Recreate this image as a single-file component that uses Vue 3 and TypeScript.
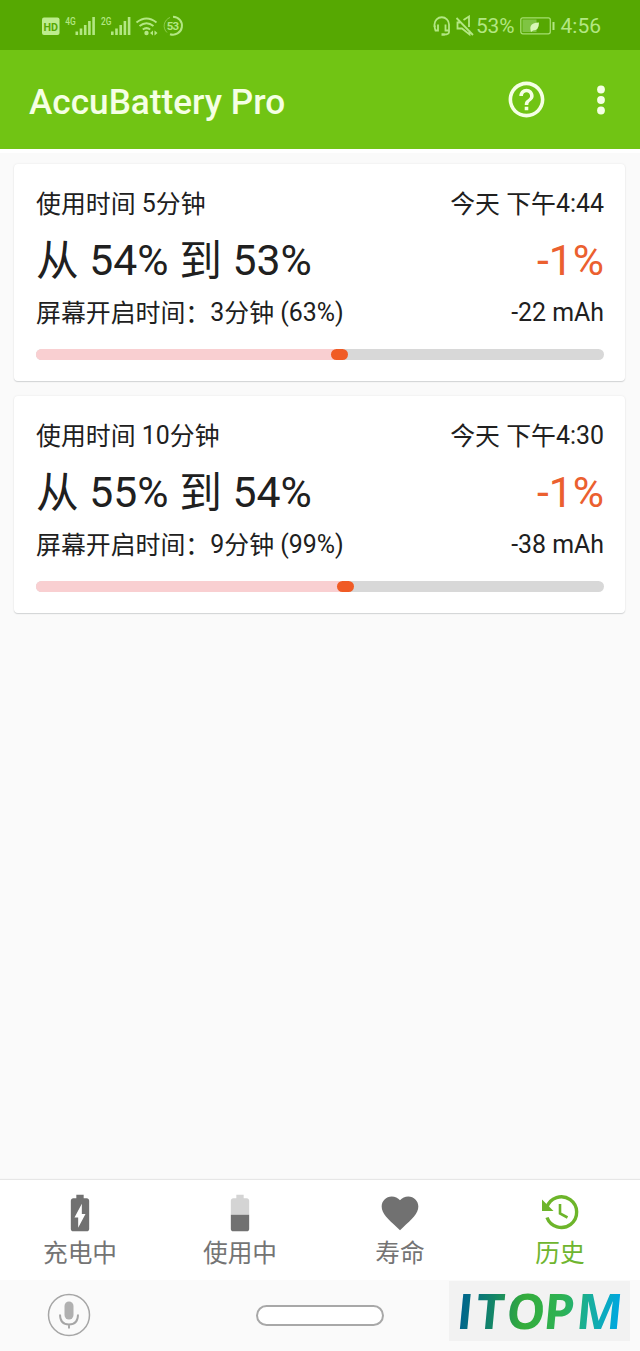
<script setup lang="ts">
interface Session {
  duration: string
  when: string
  range: string
  change: string
  screenOn: string
  charge: string
  from: number
  thumb: number
}

const sessions: Session[] = [
  { duration: '使用时间 5分钟', when: '今天 下午4:44', range: '从 54% 到 53%', change: '-1%', screenOn: '屏幕开启时间：3分钟 (63%)', charge: '-22 mAh', from: 52, thumb: 3 },
  { duration: '使用时间 10分钟', when: '今天 下午4:30', range: '从 55% 到 54%', change: '-1%', screenOn: '屏幕开启时间：9分钟 (99%)', charge: '-38 mAh', from: 53, thumb: 3 },
]

const tabs = [
  { id: 'charging', label: '充电中' },
  { id: 'using', label: '使用中' },
  { id: 'health', label: '寿命' },
  { id: 'history', label: '历史' },
]

// Splits a label into Han and Latin runs so that each gets its own baseline.
function runs(text: string): { text: string; han: boolean }[] {
  return text
    .split(/([\u4e00-\u9fff：]+)/)
    .filter((part) => part !== '')
    .map((part) => ({ text: part, han: /[\u4e00-\u9fff]/.test(part) }))
}
</script>

<template>
  <div class="screen">
    <div class="status">
      <svg class="status-left" width="144" height="24" viewBox="0 0 144 24">
        <rect x="0" y="4.500" width="17.500" height="17.500" rx="2" fill="#bdec8d" />
        <text x="1.500" y="17.600" class="hd" textLength="14.500" lengthAdjust="spacingAndGlyphs">HD</text>
        <text x="23.300" y="11.700" class="gen" textLength="10.500" lengthAdjust="spacingAndGlyphs">4G</text>
        <text x="59" y="11.700" class="gen" textLength="10.500" lengthAdjust="spacingAndGlyphs">2G</text>
        <g fill="#b3e783">
          <path d="M33.500 18.500h2.600v3.500h-2.600zM37.700 15.500h2.600v6.500h-2.600zM41.900 12h2.600v10h-2.600zM46.100 8h2.600v14h-2.600zM50.300 4h2.600v18h-2.600z" />
          <path d="M69 18.500h2.600v3.500h-2.600zM73.200 15.500h2.600v6.500h-2.600zM77.400 12h2.600v10h-2.600zM81.600 8h2.600v14h-2.600zM85.800 4h2.600v18h-2.600z" />
          <circle cx="104.500" cy="20" r="2.200" />
          <path d="M111 17.500l-3 2.500 3 2.500zM112.500 17.500l3 2.500-3 2.500z" />
        </g>
        <g fill="none" stroke="#b3e783" stroke-width="2">
          <path d="M94.500 9.500q10-8 20 0M97.500 13q7-5.500 14 0M100.800 16.500q3.700-2.800 7.400 0" />
          <path d="M131 3.700a9 9 0 1 1-3 17.500" />
          <path d="M125 19.500a9 9 0 0 1 3-15" stroke-width=".8" opacity=".7" />
        </g>
        <text x="124.700" y="17" class="speed" textLength="12.500">53</text>
      </svg>
      <div class="status-right">
        <svg width="42" height="22" viewBox="0 0 42 22" fill="none" stroke="#b3e783" stroke-width="1.800">
          <path d="M2.500 12V9.500A7.200 7.200 0 0 1 17 9.500V17q0 2.500-5 2.500" />
          <path d="M6 9.500v6H3.500q-1-2-.8-5M13.500 9.500v6H17" />
          <path d="M9.500 19.500h3" stroke-width="2.500" />
          <path d="M24.500 3L41 20M28 7.500h-2.500v6h4.500l7.500 6v-4M31.500 5l5.500-3.500v10.500" />
        </svg>
        <span class="pct">53%</span>
        <svg class="cell" width="36" height="20" viewBox="0 0 36 20">
          <rect x=".8" y="1.800" width="29.500" height="16" rx="2" fill="none" stroke="#a5de70" stroke-width="1.300" />
          <rect x="2.500" y="3.500" width="14" height="12.500" fill="#7fc443" />
          <path d="M10.500 14q-1-5 3-6.500 2-1 5.500-1 0 8-6 8l-2 1.500z" fill="#d9f8b8" />
          <path d="M33.500 6v8" stroke="#b3e783" stroke-width="2" />
        </svg>
        <span class="clock">4:56</span>
      </div>
    </div>

    <header class="appbar">
      <h1>AccuBattery Pro</h1>
      <svg class="help" width="43" height="43" viewBox="0 0 24 24" fill="#f5ffe4">
        <path d="M11 18h2v-2h-2v2zm1-16C6.480 2 2 6.480 2 12s4.480 10 10 10 10-4.480 10-10S17.520 2 12 2zm0 18c-4.410 0-8-3.590-8-8s3.590-8 8-8 8 3.590 8 8-3.590 8-8 8zm0-14c-2.210 0-4 1.790-4 4h2c0-1.100.9-2 2-2s2 .9 2 2c0 2-3 1.750-3 5h2c0-2.250 3-2.500 3-5 0-2.210-1.790-4-4-4z" />
      </svg>
      <svg class="more" width="10" height="32" viewBox="0 0 10 32" fill="#f5ffe4">
        <circle cx="5" cy="5.500" r="3.900" /><circle cx="5" cy="16" r="3.900" /><circle cx="5" cy="26.500" r="3.900" />
      </svg>
    </header>

    <main class="list">
      <section v-for="s in sessions" :key="s.when" class="card">
        <div class="row top">
          <div><span v-for="(r, i) in runs(s.duration)" :key="i" :class="{ han: r.han }">{{ r.text }}</span></div>
          <div><span v-for="(r, i) in runs(s.when)" :key="i" :class="{ han: r.han }">{{ r.text }}</span></div>
        </div>
        <div class="row big">
          <div><span v-for="(r, i) in runs(s.range)" :key="i" :class="{ han: r.han }">{{ r.text }}</span></div>
          <div class="change">{{ s.change }}</div>
        </div>
        <div class="row sub">
          <div><span v-for="(r, i) in runs(s.screenOn)" :key="i" :class="{ han: r.han }">{{ r.text }}</span></div>
          <div>{{ s.charge }}</div>
        </div>
        <div class="track">
          <div class="rest" :style="{ width: s.from + 1.5 + '%' }"></div>
          <div class="thumb" :style="{ width: s.thumb + '%' }"></div>
        </div>
      </section>
    </main>

    <nav class="tabs">
      <div v-for="t in tabs" :key="t.id" class="tab" :class="{ active: t.id === 'history' }">
        <svg v-if="t.id === 'charging'" width="44" height="44" viewBox="0 0 24 24" fill="#717171">
          <path d="M15.670 4H14V2h-4v2H8.330C7.600 4 7 4.600 7 5.330v15.330C7 21.400 7.600 22 8.330 22h7.330c.74 0 1.340-.6 1.340-1.330V5.330C17 4.600 16.400 4 15.670 4zM11 20v-5.500H9L13 7v5.500h2L11 20z" />
        </svg>
        <svg v-else-if="t.id === 'using'" width="44" height="44" viewBox="0 0 24 24">
          <path fill="#d4d4d4" d="M15.670 4H14V2h-4v2H8.330C7.600 4 7 4.600 7 5.330V13h10V5.330C17 4.600 16.400 4 15.670 4z" />
          <path fill="#717171" d="M7 13v7.670C7 21.400 7.600 22 8.330 22h7.330c.74 0 1.340-.6 1.340-1.330V13H7z" />
        </svg>
        <svg v-else-if="t.id === 'health'" width="44" height="44" viewBox="0 0 24 24" fill="#717171">
          <path d="M12 21.350l-1.450-1.320C5.400 15.360 2 12.280 2 8.500 2 5.420 4.420 3 7.500 3c1.740 0 3.410.81 4.500 2.090C13.090 3.810 14.760 3 16.500 3 19.580 3 22 5.420 22 8.500c0 3.780-3.400 6.860-8.550 11.540L12 21.350z" />
        </svg>
        <svg v-else width="44" height="44" viewBox="0 0 44 44">
          <path d="M8.800 16.500A15.300 15.300 0 1 1 9 26.500" fill="none" stroke="#6db52a" stroke-width="3.400" />
          <path d="M4 8.500v11.500h11.500z" fill="#6db52a" />
          <path d="M22 13v9.500l7.500 4" fill="none" stroke="#6db52a" stroke-width="2.600" />
        </svg>
        <span>{{ t.label }}</span>
      </div>
    </nav>

    <footer class="system">
      <svg class="mic" width="44" height="44" viewBox="0 0 44 44">
        <circle cx="22" cy="22" r="20.500" fill="none" stroke="#a6a6a6" stroke-width="1.500" />
        <rect x="17.500" y="8.500" width="9" height="18" rx="4.500" fill="#b0b0b0" />
        <path d="M13 21.500q0 10 9 10t9-10M22 31.500v4" fill="none" stroke="#a6a6a6" stroke-width="1.900" />
      </svg>
      <div class="home"></div>
      <svg class="brand" width="181" height="60" viewBox="0 0 181 60">
        <defs>
          <linearGradient id="brand-fill" gradientUnits="userSpaceOnUse" x1="10" y1="0" x2="168" y2="0">
            <stop offset="0" stop-color="#00658d" />
            <stop offset=".2" stop-color="#138568" />
            <stop offset=".4" stop-color="#35ad3b" />
            <stop offset=".65" stop-color="#2db256" />
            <stop offset=".82" stop-color="#16aea0" />
            <stop offset="1" stop-color="#00a7df" />
          </linearGradient>
        </defs>
        <g transform="translate(0 47.500) skewX(-5.500)">
          <text x="6.500 25.500 56 93.300 126" y="0" fill="url(#brand-fill)">ITOPM</text>
        </g>
      </svg>
    </footer>
  </div>
</template>

<style>
body { background: #fafafa; }
</style>

<style scoped>
.screen { width: 640px; height: 1351px; display: flex; flex-direction: column; overflow: hidden; background: #fafafa; color: #202020; font-family: Roboto, "Noto Sans CJK SC", sans-serif; }
.status { height: 50px; flex: none; box-sizing: border-box; padding: 0 39px 0 42px; display: flex; align-items: center; justify-content: space-between; background: #56a802; color: #b3e783; }
.status-left { margin-top: -1px; }
.status-right { display: flex; align-items: center; line-height: 24px; padding-top: 1px; }
.hd { font: 700 11px Roboto, sans-serif; fill: #56a802; }
.gen { font: 500 10.500px Roboto, sans-serif; fill: #b3e783; }
.speed { font: 700 11.500px Roboto, sans-serif; fill: #b3e783; }
.pct { font-size: 20.800px; margin-left: 2px; }
.cell { margin-left: 5px; }
.clock { font-size: 21px; margin-left: 5px; }
.appbar { height: 99px; flex: none; box-sizing: border-box; padding: 0 34px 0 29px; display: flex; align-items: center; background: #71c414; box-shadow: 0 4px 0 #fff; }
h1 { flex: 1; margin: 5px 0 0; font-size: 35.200px; line-height: 42px; font-weight: 500; color: #f5ffe4; }
.help { margin-right: 48px; }
.list { flex: 1; padding: 15px 15px 0 14px; display: flex; flex-direction: column; gap: 15px; }
.card { height: 217px; box-sizing: border-box; padding: 22px 21px 0 22px; border-radius: 4px; background: #fff; box-shadow: 0 1px 1px #d2d4d5, 0 0 2px #e4e4e4; }
.row { display: flex; justify-content: space-between; white-space: pre; font-size: 24.900px; }
.top { height: 34px; line-height: 36px; }
.big { height: 80px; line-height: 81px; font-size: 42.700px; }
.sub { height: 26px; line-height: 25px; }
.han { line-height: 1; vertical-align: -.035em; }
.change { color: #eb602f; }
.track { height: 11px; margin-top: 23px; border-radius: 6px; background: #d8d8d8; display: flex; overflow: hidden; }
.rest { background: #f9cfd1; margin-right: -1.500%; }
.thumb { border-radius: 6px; background: #f05b25; }
.tabs { height: 100px; flex: none; display: flex; background: #fff; box-shadow: 0 -1px 1px #e6e6e6; }
.tab { flex: 1; padding-top: 11px; display: flex; flex-direction: column; align-items: center; font-size: 24.700px; color: #747474; }
.tab span { line-height: 38px; }
.active { color: #6fb52f; }
.system { height: 71px; flex: none; display: flex; background: #fafafa; }
.mic { margin: 13px 0 0 47px; }
.home { width: 128px; height: 21px; box-sizing: border-box; margin: 25px 0 0 165px; border: 2px solid #a8a8a8; border-radius: 11px; background: #fff; }
.brand { margin: 1px 0 0 65px; background: #f2f2f2; overflow: visible; }
.brand text { font: 700 49px "Open Sans", sans-serif; }
</style>
